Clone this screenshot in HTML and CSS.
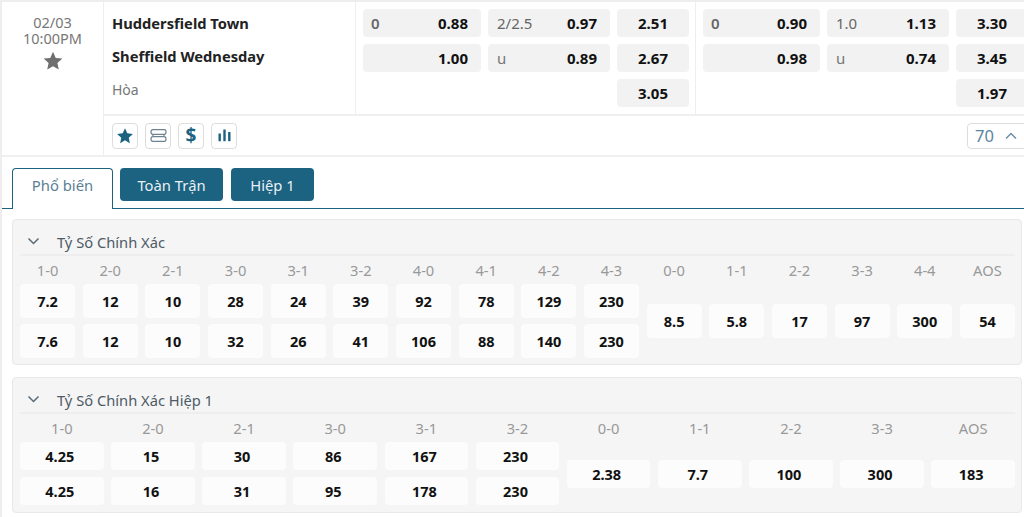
FILE: index.html
```html
<!DOCTYPE html>
<html lang="vi">
<head>
<meta charset="utf-8">
<title>Huddersfield Town - Sheffield Wednesday</title>
<link rel="stylesheet" href="styles.css">
</head>
<body>
<div class="page">
  <div class="match">
    <div class="date">
      <div>02/03</div>
      <div>10:00PM</div>
      <svg class="date-star" viewBox="0 0 24 24"><path d="M12 2l3 6.600 7.200.8-5.400 4.800 1.500 7.100L12 17.700l-6.300 3.600 1.500-7.100L1.800 9.400 9 8.600z"/></svg>
    </div>
    <div class="main">
      <div class="top">
        <div class="teams">
          <div class="team">Huddersfield Town</div>
          <div class="team">Sheffield Wednesday</div>
          <div class="draw">Hòa</div>
        </div>
        <div class="odds">
          <div class="cell hc"><span class="k">0</span><b>0.88</b></div>
          <div class="cell ou"><span class="k">2/2.5</span><b>0.97</b></div>
          <div class="cell x"><b>2.51</b></div>
          <div class="cell hc"><span class="k"></span><b>1.00</b></div>
          <div class="cell ou"><span class="k light">u</span><b>0.89</b></div>
          <div class="cell x"><b>2.67</b></div>
          <div class="cell x third"><b>3.05</b></div>
        </div>
        <div class="odds second">
          <div class="cell hc"><span class="k">0</span><b>0.90</b></div>
          <div class="cell ou"><span class="k">1.0</span><b>1.13</b></div>
          <div class="cell x"><b>3.30</b></div>
          <div class="cell hc"><span class="k"></span><b>0.98</b></div>
          <div class="cell ou"><span class="k light">u</span><b>0.74</b></div>
          <div class="cell x"><b>3.45</b></div>
          <div class="cell x third"><b>1.97</b></div>
        </div>
      </div>
      <div class="actions">
        <span class="icon"><svg viewBox="0 0 24 24" class="fill star"><path d="M12 1.500l3.100 6.800 7.400.9-5.500 5 1.500 7.300-6.500-3.700-6.500 3.700L7 14.200l-5.500-5 7.400-.9z"/></svg></span>
        <span class="icon"><svg viewBox="0 0 24 24" class="line"><path d="M5 4.500h14.500c1.500 0 2 1.200 2 3s-1 3-2.500 3h-.5c.8 1 .8 2 0 3h.5c1.500 0 2.500 1.200 2.500 3s-.5 3-2 3H5c-1.500 0-2.500-1.200-2.500-3s1-3 2.500-3h.5c-.8-1-.8-2 0-3H5c-1.500 0-2.500-1.200-2.500-3s1-3 2.500-3zM5 10.500h13.500M5 13.500h13.500"/></svg></span>
        <span class="icon"><span class="dollar">$</span></span>
        <span class="icon"><svg viewBox="0 0 24 24" class="fill bars"><rect x="3.500" y="9" width="3.400" height="11" rx=".5"/><rect x="10.300" y="3.500" width="3.400" height="16.500" rx=".5"/><rect x="17.100" y="7" width="3.400" height="13" rx=".5"/></svg></span>
        <div class="select"><span>70</span><svg viewBox="0 0 12 8"><path d="M1 6.500l5-5 5 5"/></svg></div>
      </div>
    </div>
  </div>

  <div class="tabs">
    <div class="tab active">Phổ biến</div>
    <div class="tab wide">Toàn Trận</div>
    <div class="tab">Hiệp 1</div>
  </div>

  <section class="panel p1">
    <header class="head"><svg viewBox="0 0 12 8"><path d="M1 1.500l5 5 5-5"/></svg><span>Tỷ Số Chính Xác</span></header>
    <div class="grid g16">
      <div class="col"><i>1-0</i><b>7.2</b><b>7.6</b></div>
      <div class="col"><i>2-0</i><b>12</b><b>12</b></div>
      <div class="col"><i>2-1</i><b>10</b><b>10</b></div>
      <div class="col"><i>3-0</i><b>28</b><b>32</b></div>
      <div class="col"><i>3-1</i><b>24</b><b>26</b></div>
      <div class="col"><i>3-2</i><b>39</b><b>41</b></div>
      <div class="col"><i>4-0</i><b>92</b><b>106</b></div>
      <div class="col"><i>4-1</i><b>78</b><b>88</b></div>
      <div class="col"><i>4-2</i><b>129</b><b>140</b></div>
      <div class="col"><i>4-3</i><b>230</b><b>230</b></div>
      <div class="col mid"><i>0-0</i><b>8.5</b></div>
      <div class="col mid"><i>1-1</i><b>5.8</b></div>
      <div class="col mid"><i>2-2</i><b>17</b></div>
      <div class="col mid"><i>3-3</i><b>97</b></div>
      <div class="col mid"><i>4-4</i><b>300</b></div>
      <div class="col mid"><i>AOS</i><b>54</b></div>
    </div>
  </section>

  <section class="panel p2">
    <header class="head"><svg viewBox="0 0 12 8"><path d="M1 1.500l5 5 5-5"/></svg><span>Tỷ Số Chính Xác Hiệp 1</span></header>
    <div class="grid g11">
      <div class="col"><i>1-0</i><b>4.25</b><b>4.25</b></div>
      <div class="col"><i>2-0</i><b>15</b><b>16</b></div>
      <div class="col"><i>2-1</i><b>30</b><b>31</b></div>
      <div class="col"><i>3-0</i><b>86</b><b>95</b></div>
      <div class="col"><i>3-1</i><b>167</b><b>178</b></div>
      <div class="col"><i>3-2</i><b>230</b><b>230</b></div>
      <div class="col mid"><i>0-0</i><b>2.38</b></div>
      <div class="col mid"><i>1-1</i><b>7.7</b></div>
      <div class="col mid"><i>2-2</i><b>100</b></div>
      <div class="col mid"><i>3-3</i><b>300</b></div>
      <div class="col mid"><i>AOS</i><b>183</b></div>
    </div>
  </section>
</div>
</body>
</html>
```
FILE: styles.css
```css
* { box-sizing: border-box; }
html, body { margin: 0; height: 100%; overflow: hidden; background: #fff; }
body { font-family: "Noto Sans", "Open Sans", sans-serif; font-size: 14px; color: #222; }
.page { width: 1024px; height: 517px; overflow: hidden; border-left: 2px solid #eee; border-top: 2px solid #eee; }

.match { display: flex; height: 155px; border-bottom: 2px solid #f0f0f0; }
.date { width: 102px; flex: none; border-right: 1px solid #eee; text-align: center; color: #777; font-size: 14.500px; line-height: 16px; padding-top: 12px; }
.date-star { display: block; width: 22px; height: 22px; margin: 4px auto 0; fill: #6f6f6f; }
.main { flex: 1; min-width: 0; }
.top { display: flex; height: 114px; border-bottom: 2px solid #f0f0f0; }
.teams { width: 252px; flex: none; border-right: 1px solid #eee; padding: 5px 0 0 8px; }
.team { font-weight: 700; font-size: 14.700px; line-height: 33px; height: 33px; color: #222; white-space: nowrap; }
.draw { font-size: 14px; line-height: 34px; color: #777; }

.odds { width: 340px; flex: none; display: grid; grid-template-columns: 118px 122px 72px; grid-template-rows: 28px 28px 28px; gap: 7px; padding: 7px 0 0 7px; border-right: 1px solid #eee; align-content: start; }
.odds.second { border-right: 0; grid-template-columns: 117px 122px 72px; width: 330px; flex: none; }
.cell { background: #f2f2f2; border-radius: 4px; display: flex; align-items: center; justify-content: center; font-size: 15px; color: #111; }
.cell.hc, .cell.ou { justify-content: space-between; padding: 0 13px 0 9px; }
.cell.hc { padding-left: 8px; }
.cell b { font-weight: 700; }
.k { color: #666; font-weight: 400; }
.hc .k { font-weight: 600; }
.k.light { color: #777; }
.third { grid-column: 3; }

.actions { display: flex; align-items: center; gap: 7px; height: 39px; padding: 0 0 0 8px; }
.icon { width: 26px; height: 26px; flex: none; border: 1px solid #ddd; border-radius: 4px; background: #fff; display: flex; align-items: center; justify-content: center; color: #1c6281; }
.icon svg { width: 19px; height: 19px; }
.icon .star { width: 18px; height: 18px; }
.icon .bars { width: 17px; height: 17px; }
.icon .fill { fill: #1c6281; }
.icon .line { fill: none; stroke: #6f8290; stroke-width: 1.500; }
.dollar { font-size: 19px; font-weight: 700; line-height: 1; }
.select { width: 100px; height: 26px; margin-left: auto; margin-right: -43px; flex: none; border: 1px solid #ddd; border-radius: 4px; display: flex; align-items: center; gap: 11px; padding-left: 7px; color: #5b84a0; font-size: 16.500px; }
.select svg { width: 12px; height: 8px; fill: none; stroke: #6f8ea3; stroke-width: 1.500; }

.tabs { display: flex; gap: 7px; height: 52px; padding: 11px 0 0 10px; border-bottom: 1px solid #1c6281; align-items: flex-start; }
.tab { width: 83px; height: 33px; margin-right: 1px; background: #1c6281; color: #e8f0f4; border-radius: 4px; display: flex; align-items: center; justify-content: center; font-size: 14.800px; }
.tab.wide { width: 103px; }
.tab.active { width: 101px; height: 41px; margin-right: 0; background: #fff; color: #5b7f95; border: 1px solid #1c6281; border-bottom: 0; border-radius: 4px 4px 0 0; padding-bottom: 8px; }

.panel { width: 1010px; margin-left: 10px; background: #f5f5f5; border: 1px solid #e8e8e8; border-radius: 4px; padding: 0 6px 0 7px; }
.p1 { height: 146px; margin-top: 10px; }
.p2 { height: 136px; margin-top: 12px; }
.head { display: flex; align-items: flex-end; gap: 17px; height: 36px; padding: 0 0 2px 7px; border-bottom: 2px solid #eee; color: #4d5b66; font-size: 14.700px; line-height: 20px; }
.head svg { width: 13px; height: 8px; fill: none; stroke: #5a6b76; stroke-width: 1.500; margin-bottom: 7px; }

.grid { display: grid; column-gap: 7.500px; }
.g16 { grid-template-columns: repeat(16, 1fr); }
.g11 { grid-template-columns: repeat(11, 1fr); }
.col { display: flex; flex-direction: column; }
.col i { font-style: normal; text-align: center; color: #999; font-size: 14.700px; line-height: 20px; height: 28px; padding-top: 4px; }
.col b { display: flex; align-items: center; justify-content: center; background: #fcfcfc; border-radius: 4px; color: #111; font-size: 14.500px; font-weight: 700; }
.g16 .col b { height: 34px; margin-bottom: 6px; }
.g16 .mid b { margin-top: 20px; }
.g11 .col b { height: 28px; margin-bottom: 7px; padding-right: 4px; }
.g11 .mid b { margin-top: 18px; }
```
